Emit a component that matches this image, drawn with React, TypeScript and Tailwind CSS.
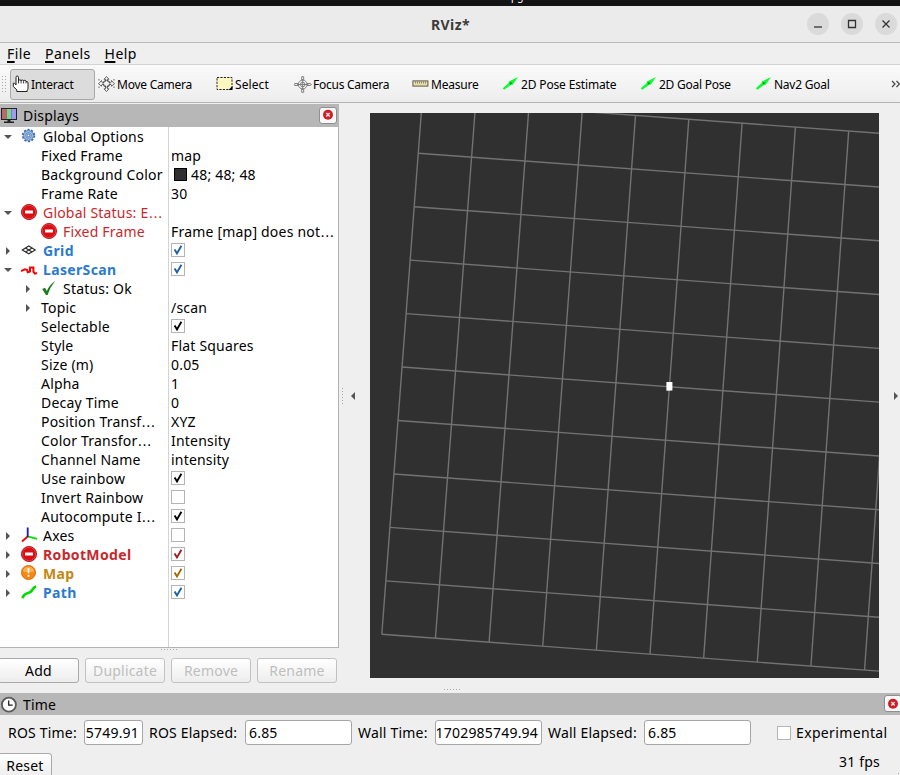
import React from 'react';

type Tone = 'black' | 'error' | 'warn' | 'link';
type CheckTone = 'black' | 'red' | 'amber' | 'blue';

interface TreeRow {
  label: string;
  level: 0 | 1;
  arrow?: 'open' | 'closed';
  icon?: React.ReactNode;
  tone?: Tone;
  bold?: boolean;
  value?: string;
  swatch?: boolean;
  check?: CheckTone | 'off';
}

const TONE_CLASSES: Record<Tone, string> = {
  black: 'text-black',
  error: 'text-[#c8282d]',
  warn: 'text-[#c4870f]',
  link: 'text-[#2a7bcb]',
};

const CHECK_COLORS: Record<CheckTone, string> = {
  black: '#000000',
  red: '#9c1f22',
  amber: '#a06c00',
  blue: '#1d5fa3',
};

function GearIcon() {
  return (
    <svg width="16" height="16" viewBox="0 0 16 16">
      <circle cx="7.5" cy="7.5" r="5.8" fill="none" stroke="#3f6fb0" strokeWidth="1.8" strokeDasharray="2.2 1.45" />
      <circle cx="7.5" cy="7.5" r="4.9" fill="#a9c6ea" stroke="#3f6fb0" strokeWidth="0.9" />
      <circle cx="7.5" cy="7.5" r="2.9" fill="none" stroke="#3f6fb0" strokeWidth="0.7" />
      <circle cx="7.5" cy="7.5" r="1.3" fill="#fff" stroke="#3f6fb0" strokeWidth="0.9" />
    </svg>
  );
}

function ErrorIcon() {
  return (
    <svg width="16" height="16" viewBox="0 0 16 16">
      <circle cx="8" cy="8" r="7.6" fill="#d90f14" stroke="#a30a0c" strokeWidth="0.8" />
      <circle cx="8" cy="8" r="6.7" fill="none" stroke="#ee5a5a" strokeWidth="0.6" />
      <rect x="4" y="6.6" width="8" height="2.8" rx="0.4" fill="#fff" />
    </svg>
  );
}

function WarnIcon() {
  return (
    <svg width="16" height="16" viewBox="0 0 16 16">
      <circle cx="7.5" cy="7.5" r="7" fill="#f8860f" stroke="#c8670a" strokeWidth="0.9" />
      <path d="M1.8 6.5a5.8 5.8 0 0 1 11.4 0q-5.7 2-11.4 0z" fill="#fcaf52" />
      <path d="M6.5 3.2h2l-.4 5.2h-1.2z" fill="#fff" />
      <circle cx="7.5" cy="10.8" r="1.1" fill="#fff" />
    </svg>
  );
}

function GridIcon() {
  return (
    <svg width="16" height="16" viewBox="0 0 16 16" fill="none" stroke="#2e2e2e" strokeWidth="1.15">
      <path d="M1.3 7.9 7.8 4l6.5 3.9-6.5 3.9z" />
      <path d="m4.5 5.9 6.6 4M11.1 5.9l-6.6 4" />
    </svg>
  );
}

function LaserIcon() {
  return (
    <svg width="17" height="16" viewBox="0 0 17 16" fill="none" stroke="#ff0000" strokeWidth="2">
      <path d="M0 10 4 8.4l2.2.6.6 2.2 2.2-.6V6.4h3.4v4.2l1.4 2 2.2-.6" />
    </svg>
  );
}

function OkIcon() {
  return (
    <svg width="16" height="16" viewBox="0 0 16 16">
      <path d="M1.2 9 4 7.8l1.8 3.2Q8.8 4.4 14 1 9.2 7 6.6 15H4.9z" fill="#1d7a1d" />
    </svg>
  );
}

function AxesIcon() {
  return (
    <svg width="17" height="16" viewBox="0 0 17 16" fill="none" strokeWidth="1.8">
      <path d="M6.7 9.5 1 14.5" stroke="#ff0000" />
      <path d="M6.7 9.3 16 11.8" stroke="#00e000" />
      <path d="M6.7 10V.5" stroke="#1414d8" />
    </svg>
  );
}

function PathIcon() {
  return (
    <svg width="17" height="16" viewBox="0 0 17 16">
      <path d="M1.6 14.3C2.6 8.7 6.3 10 9.3 8 12 6.3 12 3 15.2 2.5" fill="none" stroke="#00dc00" strokeWidth="2.7" />
    </svg>
  );
}

const ROWS: TreeRow[] = [
  { label: 'Global Options', level: 0, arrow: 'open', icon: <GearIcon /> },
  { label: 'Fixed Frame', level: 1, value: 'map' },
  { label: 'Background Color', level: 1, value: '48; 48; 48', swatch: true },
  { label: 'Frame Rate', level: 1, value: '30' },
  { label: 'Global Status: E…', level: 0, arrow: 'open', icon: <ErrorIcon />, tone: 'error' },
  { label: 'Fixed Frame', level: 1, icon: <ErrorIcon />, tone: 'error', value: 'Frame [map] does not…' },
  { label: 'Grid', level: 0, arrow: 'closed', icon: <GridIcon />, tone: 'link', bold: true, check: 'blue' },
  { label: 'LaserScan', level: 0, arrow: 'open', icon: <LaserIcon />, tone: 'link', bold: true, check: 'blue' },
  { label: 'Status: Ok', level: 1, arrow: 'closed', icon: <OkIcon /> },
  { label: 'Topic', level: 1, arrow: 'closed', value: '/scan' },
  { label: 'Selectable', level: 1, check: 'black' },
  { label: 'Style', level: 1, value: 'Flat Squares' },
  { label: 'Size (m)', level: 1, value: '0.05' },
  { label: 'Alpha', level: 1, value: '1' },
  { label: 'Decay Time', level: 1, value: '0' },
  { label: 'Position Transf…', level: 1, value: 'XYZ' },
  { label: 'Color Transfor…', level: 1, value: 'Intensity' },
  { label: 'Channel Name', level: 1, value: 'intensity' },
  { label: 'Use rainbow', level: 1, check: 'black' },
  { label: 'Invert Rainbow', level: 1, check: 'off' },
  { label: 'Autocompute I…', level: 1, check: 'black' },
  { label: 'Axes', level: 0, arrow: 'closed', icon: <AxesIcon />, check: 'off' },
  { label: 'RobotModel', level: 0, arrow: 'closed', icon: <ErrorIcon />, tone: 'error', bold: true, check: 'red' },
  { label: 'Map', level: 0, arrow: 'closed', icon: <WarnIcon />, tone: 'warn', bold: true, check: 'amber' },
  { label: 'Path', level: 0, arrow: 'closed', icon: <PathIcon />, tone: 'link', bold: true, check: 'blue' },
];

function Arrow({ dir }: { dir: 'open' | 'closed' | 'left' }) {
  const d = { open: 'M0 2h8L4 6z', closed: 'M2 0v8l4-4z', left: 'M6 0v8L2 4z' }[dir];
  return (
    <svg width="8" height="8" viewBox="0 0 8 8" className="shrink-0">
      <path d={d} fill="#555" />
    </svg>
  );
}

// Elided text gets a wider ellipsis than the body font has.
function Elided({ text }: { text: string }) {
  if (!text.endsWith('…')) return <span>{text}</span>;
  return (
    <span>
      {text.slice(0, -1)}
      <span className="font-['DejaVu_Sans',sans-serif] leading-none">…</span>
    </span>
  );
}

function CheckBox({ state }: { state: CheckTone | 'off' }) {
  return (
    <span className="flex h-[14px] w-[14px] shrink-0 items-center justify-center border border-[#b4b4b4] bg-white">
      {state !== 'off' && (
        <svg width="12" height="12" viewBox="0 0 12 12">
          <path d="M2.6 5.4 5 9.4 9.4 1.8" fill="none" stroke={CHECK_COLORS[state]} strokeWidth="1.9" />
        </svg>
      )}
    </span>
  );
}

function Row({ row }: { row: TreeRow }) {
  return (
    <div className="flex h-[19px] items-center">
      <div
        className={`flex h-full w-[168px] shrink-0 items-center whitespace-nowrap ${row.level === 0 ? 'pl-1' : 'pl-6'} ${
          row.bold ? 'font-bold tracking-[0.35px]' : ''
        } ${TONE_CLASSES[row.tone ?? 'black']}`}
      >
        <span className="flex w-[17px] shrink-0">{row.arrow && <Arrow dir={row.arrow} />}</span>
        {row.icon && <span className="mb-0.5 mr-[5px] flex w-[17px] shrink-0">{row.icon}</span>}
        <Elided text={row.label} />
      </div>
      <div className="flex h-full flex-1 items-center whitespace-nowrap pl-[3px]">
        {row.swatch && <span className="mr-1 ml-[3px] h-[13px] w-[13px] border border-black bg-[#303030]" />}
        {row.value && <Elided text={row.value} />}
        {row.check && (
          <span className="mb-0.5">
            <CheckBox state={row.check} />
          </span>
        )}
      </div>
    </div>
  );
}

function HandIcon() {
  return (
    <svg width="17" height="18" viewBox="0 0 17 18" className="-ml-px">
      <path
        d="M4 10V2.4Q4 1 5.2 1t1.3 1.4V6q0-1.2 1.3-1.2T9.1 6q0-1 1.2-1t1.3 1.2q0-.9 1.2-.9T14 6.5q2-.3 2 1.4v5.3q0 1.3-.8 2v1.3H4.8v-1.7L1.3 11.5V8.2q1.5-.6 2.7 1.8z"
        fill="#fff"
        stroke="#222"
        strokeWidth="1"
      />
      <path d="M6.5 6v2.4M9.1 6v2.4M11.6 6.2v2.2M14 6.5v1.9" stroke="#222" strokeWidth="0.9" />
    </svg>
  );
}

function MoveIcon() {
  return (
    <svg width="17" height="16" viewBox="0 0 17 16" fill="#f2f2f2" stroke="#4f4f4f" strokeWidth="0.85">
      <path d="M8.5.5 11 3.3H9.5v2L12 6.6l1.5-.8V4.5l3 3.3-3 2.4V9L12 8.3 9.5 9.8v3H11l-2.5 2.8L6 12.8h1.5v-3L5 8.3 3.5 9v1.2L.5 7.8l3-3.3v1.3l1.5.8 2.5-1.3v-2H6z" />
      <circle cx="8.5" cy="7.7" r="3.4" fill="none" />
      <path d="M1 4.5V3M16 4.5V3M1 10.5V12M16 10.5V12" />
    </svg>
  );
}

function SelectIcon() {
  return (
    <svg width="17" height="16" viewBox="0 0 17 16">
      <rect x="1" y="1.5" width="15" height="12" fill="#fff7c0" stroke="#222" strokeWidth="1" strokeDasharray="2.2 1.2" />
      <path d="M16.5 10v4h-4z" fill="#000" />
    </svg>
  );
}

function FocusIcon() {
  return (
    <svg width="18" height="17" viewBox="0 0 18 17" fill="#f4f4f4" stroke="#777" strokeWidth="0.9">
      <path d="M7.7.7h2v4h-2zM7.7 12.3h2v4h-2zM.7 7.5h4v2h-4zM12.5 7.5H16l1.5 1-1.5 1h-3.5z" />
      <circle cx="8.7" cy="8.5" r="4.4" />
      <circle cx="8.7" cy="8.5" r="2.3" />
      <path d="M8.7 3v11M3 8.5h11.4" />
    </svg>
  );
}

function RulerIcon() {
  return (
    <svg width="17" height="16" viewBox="0 0 17 16">
      <rect x=".9" y="4.9" width="15" height="5.2" fill="#e9dfae" stroke="#5d5948" strokeWidth="1" />
      <path d="M3.5 5.5v2M5.5 5.5v2M7.5 5.5v2M9.5 5.5v2M11.5 5.5v2M13.5 5.5v2" stroke="#77704f" strokeWidth=".8" />
    </svg>
  );
}

function GreenArrowIcon() {
  return (
    <svg width="17" height="16" viewBox="0 0 17 16">
      <path d="M.8 12.2 7 6.8 6.4 5.7 16 1l-5.3 7.8-1-.4-7.4 5.3z" fill="#0dfb2f" />
      <path d="m7.4 6.9 1.2 1.5 1-.3.4-1.2-1.2-1z" fill="#08961d" />
    </svg>
  );
}

const TOOLS = [
  { label: 'Interact', icon: <HandIcon />, width: 'w-[85px]', spacing: 'tracking-[-0.2px]', active: true },
  { label: 'Move Camera', icon: <MoveIcon />, width: 'w-[118px]', spacing: 'ml-px tracking-[-0.25px]' },
  { label: 'Select', icon: <SelectIcon />, width: 'w-[78px]', spacing: 'ml-px tracking-[0.1px]' },
  { label: 'Focus Camera', icon: <FocusIcon />, width: 'w-[118px]', spacing: 'ml-px tracking-[-0.25px]' },
  { label: 'Measure', icon: <RulerIcon />, width: 'w-[90px]', spacing: 'ml-px tracking-[-0.2px]' },
  { label: '2D Pose Estimate', icon: <GreenArrowIcon />, width: 'w-[138px]', spacing: 'ml-px tracking-[-0.15px]' },
  { label: '2D Goal Pose', icon: <GreenArrowIcon />, width: 'w-[115px]', spacing: 'ml-px tracking-[-0.25px]' },
  { label: 'Nav2 Goal', icon: <GreenArrowIcon />, width: 'w-[100px]', spacing: 'ml-px tracking-[-0.25px]' },
];

function CloseButton() {
  return (
    <button
      type="button"
      aria-label="Close panel"
      className="mb-px flex h-[17px] w-[18px] shrink-0 items-center justify-center rounded-[3px] border border-[#8f8f8f] bg-[#f8f8f8]"
    >
      <svg width="12" height="12" viewBox="0 0 12 12">
        <circle cx="6" cy="5.7" r="5" fill="#cd1f27" />
        <path d="m4.3 4 3.4 3.4M7.7 4 4.3 7.4" stroke="#f6dede" strokeWidth="1.4" />
      </svg>
    </button>
  );
}

function PushButton({ label, width, disabled }: { label: string; width: string; disabled?: boolean }) {
  return (
    <button
      type="button"
      disabled={disabled}
      className={`h-[25px] shrink-0 rounded-[3px] border bg-linear-to-b from-white to-[#ededed] leading-none ${width} ${
        disabled ? 'border-[#c2c2c2] text-[#bebebe]' : 'border-[#a9a9a9] text-black'
      }`}
    >
      {label}
    </button>
  );
}

function Dots({ vertical }: { vertical?: boolean }) {
  return (
    <div className={`flex gap-[2px] ${vertical ? 'flex-col' : ''}`}>
      {Array.from({ length: 6 }, (_, i) => (
        <span key={i} className="h-px w-px bg-[#aaa]" />
      ))}
    </div>
  );
}

// Plane corners in view coordinates, slightly narrower at the far edge.
const PLANE = { tl: [52.3, -13.2], tr: [585.3, 25.8], bl: [11.8, 521.3], br: [548.2, 561] };
const CELLS = 10;

function mix(a: number[], b: number[], t: number) {
  return [a[0] + (b[0] - a[0]) * t, a[1] + (b[1] - a[1]) * t];
}

function RenderView() {
  const lines = Array.from({ length: CELLS + 1 }, (_, i) => i / CELLS).flatMap((t) => [
    [mix(PLANE.tl, PLANE.tr, t), mix(PLANE.bl, PLANE.br, t)],
    [mix(PLANE.tl, PLANE.bl, t), mix(PLANE.tr, PLANE.br, t)],
  ]);

  return (
    <svg width="509" height="565" viewBox="0 0 509 565" className="block shrink-0 bg-[#303030]">
      {lines.map(([a, b], i) => (
        <line key={i} x1={a[0]} y1={a[1]} x2={b[0]} y2={b[1]} stroke="#727272" strokeWidth="1.4" />
      ))}
      <path d="M296.4 269h6v8.5l-6 .3z" fill="#fff" />
    </svg>
  );
}

function TimeField({ label, value, labelWidth, width, clip }: {
  label: string;
  value: string;
  labelWidth: string;
  width: string;
  clip?: boolean;
}) {
  return (
    <>
      <span className={`shrink-0 whitespace-nowrap ${labelWidth}`}>{label}</span>
      <span
        className={`flex h-[25px] shrink-0 items-center whitespace-nowrap rounded-[3px] border border-[#a6a6a6] bg-white ${width} ${
          clip ? 'justify-end pr-[3px]' : 'pl-[3px]'
        }`}
      >
        {value}
      </span>
    </>
  );
}

export default function App() {
  return (
    <div className="flex h-[775px] w-[900px] flex-col overflow-hidden bg-[#efefef] font-['Noto_Sans','Open_Sans',sans-serif] text-[14px] leading-[19px] tracking-[0.2px] text-black">
      <div className="flex h-[6px] shrink-0 items-start bg-[#141414] pl-[511px] text-[10px] leading-[10px] text-white">
        <span className="-mt-[9px]">pg</span>
      </div>

      <header className="grid h-[37px] shrink-0 grid-cols-[1fr_auto_1fr] items-center border-b border-[#b9b9b9] bg-[#ebebeb] pr-[3px] pl-[4px]">
        <span />
        <h1 className="text-[14px] font-bold tracking-[0.45px] text-[#3c3c3c]">RViz*</h1>
        <div className="flex justify-end gap-3 text-[#333]">
          {['M6 13h8', 'M6.5 6.5h7v7h-7z', 'm6.5 6.5 7 7M13.5 6.5l-7 7'].map((d) => (
            <span key={d} className="flex h-[22px] w-[22px] items-center justify-center rounded-full bg-[#dadada]">
              <svg width="20" height="20" viewBox="0 0 20 20" fill="none" stroke="currentColor" strokeWidth="1.3">
                <path d={d} />
              </svg>
            </span>
          ))}
        </div>
      </header>

      <nav className="flex h-[22px] shrink-0 items-center gap-[14px] border-b border-[#d3d3d3] pl-[7px] tracking-[0.4px]">
        {['File', 'Panels', 'Help'].map((item) => (
          <span key={item}>
            <span className="underline decoration-[1.5px] underline-offset-2">{item[0]}</span>
            {item.slice(1)}
          </span>
        ))}
      </nav>

      <div className="flex h-[38px] shrink-0 items-center border-b border-[#b3b3b3] bg-linear-to-b from-[#fafafa] to-[#ededed] pt-px text-[12px]">
        <div className="flex w-[10px] shrink-0 gap-[2px] pl-[2px]">
          <Dots vertical />
          <Dots vertical />
        </div>
        {TOOLS.map((tool) => (
          <div
            key={tool.label}
            className={`flex h-[31px] shrink-0 items-center rounded-[3px] border whitespace-nowrap ${tool.width} ${
              tool.active ? 'mr-px border-[#a8a8a8] bg-[#dcdcdc] pl-[2px]' : 'border-transparent pl-px'
            }`}
          >
            <span className="flex w-[18px] shrink-0">{tool.icon}</span>
            <span className={tool.spacing}>{tool.label}</span>
          </div>
        ))}
        <svg width="10" height="8" viewBox="0 0 10 8" className="ml-auto" fill="none" stroke="#444" strokeWidth="1.2">
          <path d="m2 1 3 3-3 3M6.5 1l3 3-3 3" />
        </svg>
      </div>

      <main className="flex h-[590px] shrink-0">
        <section className="flex w-[339px] shrink-0 flex-col pt-px">
          <div className="flex h-[23px] shrink-0 items-center bg-[#b7b7b7] pr-[2px]">
            <svg width="17" height="17" viewBox="0 0 17 17">
              <rect x="1" y="1" width="16" height="12" fill="#222" />
              <path d="M2 2h4.6v10H2z" fill="#b86a70" />
              <path d="M6.6 2h4.8v10H6.6z" fill="#83cf8c" />
              <path d="M11.4 2H16v10h-4.6z" fill="#9c9cf0" />
              <path d="M7.5 13h3v1.5H14V16H4v-1.5h3.5z" fill="#222" />
            </svg>
            <span className="ml-[6px] flex-1">Displays</span>
            <CloseButton />
          </div>
          <div className="h-[521px] shrink-0 border-r border-b border-[#b3b3b3] bg-white">
            <div className="h-full bg-linear-to-r from-[#d4d4d4] to-[#d4d4d4] bg-[length:1px_100%] bg-[position:168px_0] bg-no-repeat">
              {ROWS.map((row, i) => (
                <Row key={i} row={row} />
              ))}
            </div>
          </div>
          <div className="flex h-[10px] shrink-0 pt-px pl-[161px]">
            <Dots />
          </div>
          <div className="-ml-[2px] flex gap-[6px]">
            <PushButton label="Add" width="w-[81px]" />
            <PushButton label="Duplicate" width="w-[80px]" disabled />
            <PushButton label="Remove" width="w-[80px]" disabled />
            <PushButton label="Rename" width="w-[80px]" disabled />
          </div>
        </section>

        <div className="flex w-[31px] shrink-0 items-center gap-[6px] pb-[5px] pl-[3px]">
          <Dots vertical />
          <Arrow dir="left" />
        </div>
        <div className="flex w-[509px] shrink-0 flex-col pt-[10px]">
          <RenderView />
          <div className="pt-[11px] pl-[74px]">
            <Dots />
          </div>
        </div>
        <div className="flex flex-1 items-center justify-end pb-[5px]">
          <Arrow dir="closed" />
        </div>
      </main>

      <section className="flex flex-1 flex-col">
        <div className="flex h-[22px] shrink-0 items-center bg-[#b7b7b7]">
          <svg width="17" height="17" viewBox="0 0 17 17">
            <circle cx="8.9" cy="8.7" r="7" fill="#fff" stroke="#5c5c5c" strokeWidth="1.8" />
            <path d="M8.7 4.5v4.7h4" fill="none" stroke="#222" strokeWidth="1.3" />
          </svg>
          <span className="ml-[6px] flex-1">Time</span>
          <span className="-mr-[2px] flex">
            <CloseButton />
          </span>
        </div>
        <div className="flex h-[35px] shrink-0 items-center pl-2">
          <TimeField label="ROS Time:" value="5749.91" labelWidth="w-[76px]" width="mr-[6px] w-[59px]" clip />
          <TimeField label="ROS Elapsed:" value="6.85" labelWidth="w-[96px]" width="mr-[6px] w-[107px]" />
          <TimeField label="Wall Time:" value="1702985749.94" labelWidth="w-[77px]" width="mr-[6px] w-[107px]" clip />
          <TimeField label="Wall Elapsed:" value="6.85" labelWidth="w-[96px]" width="mr-[26px] w-[107px]" />
          <CheckBox state="off" />
          <span className="ml-[5px] whitespace-nowrap tracking-[0.35px]">Experimental</span>
        </div>
        <div className="flex flex-1 overflow-hidden">
          <div className="-ml-[2px] flex pt-[3px]">
            <PushButton label="Reset" width="w-[54px]" />
          </div>
          <span className="ml-auto pt-[2px] pr-[20px] whitespace-nowrap">31 fps</span>
          <svg width="5" height="5" viewBox="0 0 5 5" className="-ml-[5px] self-end" fill="#a8a8a8">
            <path d="M3 0h1v1H3zM0 3h1v1H0zM3 3h1v1H3z" />
          </svg>
        </div>
      </section>
    </div>
  );
}
